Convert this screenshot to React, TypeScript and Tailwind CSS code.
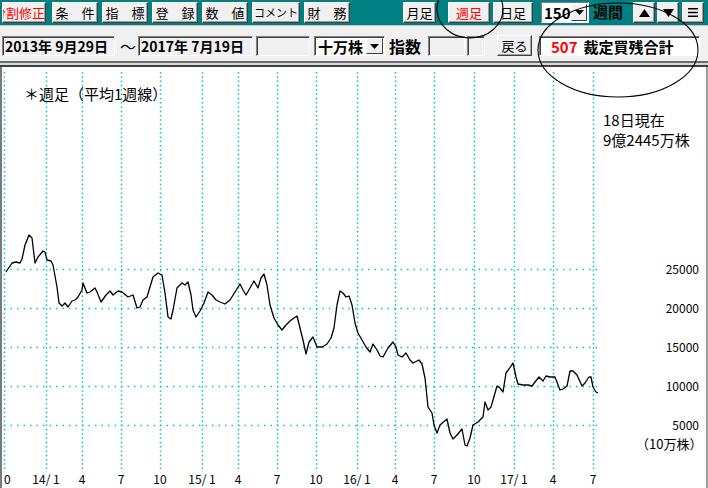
import React from "react";

// --- chart data (page coordinates) ---
const LINE: [number, number][] = [
  [6, 272], [12, 263], [16, 262], [20, 263], [22, 259], [25, 245], [29, 235], [32, 238], [35, 263], [38, 257],
  [43, 251], [45, 252], [47, 260], [51, 261], [53, 265], [57, 287], [59, 303], [62, 306], [65, 303], [68, 307],
  [72, 301], [75, 300], [78, 297], [82, 290], [83, 283], [87, 293], [90, 292], [95, 288], [97, 292], [101, 302],
  [106, 295], [108, 293], [110, 291], [113, 295], [118, 291], [122, 292], [128, 297], [133, 295], [137, 308],
  [140, 307], [143, 300], [147, 297], [150, 287], [153, 277], [158, 273], [162, 275], [165, 293], [168, 317],
  [171, 319], [173, 310], [177, 288], [182, 283], [185, 285], [188, 282], [191, 295], [193, 310], [196, 317],
  [200, 311], [204, 303], [208, 292], [212, 295], [216, 300], [220, 302], [225, 304], [230, 300], [235, 292],
  [240, 284], [243, 290], [246, 295], [250, 288], [254, 281], [258, 288], [261, 278], [264, 274], [267, 285],
  [270, 305], [274, 318], [278, 325], [282, 330], [286, 325], [290, 321], [294, 318], [297, 316], [300, 328],
  [303, 340], [306, 354], [309, 342], [313, 337], [317, 347], [322, 347], [327, 344], [331, 338], [334, 328],
  [337, 305], [340, 291], [343, 293], [346, 297], [349, 296], [352, 305], [355, 323], [358, 333], [362, 340],
  [366, 347], [370, 352], [373, 344], [377, 350], [380, 356], [383, 357], [388, 348], [393, 342], [396, 347],
  [398, 355], [402, 357], [406, 353], [410, 360], [413, 363], [419, 360], [422, 364], [425, 378], [428, 407],
  [432, 413], [434, 425], [437, 433], [440, 425], [447, 419], [450, 433], [453, 439], [457, 435], [462, 429],
  [465, 445], [467, 446], [470, 438], [473, 425], [478, 422], [483, 417], [485, 402], [488, 410], [491, 407],
  [495, 393], [497, 386], [500, 388], [503, 392], [506, 373], [509, 369], [513, 363], [516, 377], [518, 384],
  [523, 385], [528, 385], [532, 386], [535, 382], [539, 377], [543, 381], [546, 376], [550, 377], [555, 377],
  [560, 390], [563, 389], [567, 386], [570, 371], [573, 371], [577, 375], [582, 386], [585, 383], [589, 377],
  [591, 377], [593, 387], [596, 392], [598, 393],
];

const V_LINES = [4, 46, 82, 121, 160, 202, 238, 277, 316, 357, 395, 434, 474, 514, 553, 593];
const X_LABELS = ["", "14/ 1", "4", "7", "10", "15/ 1", "4", "7", "10", "16/ 1", "4", "7", "10", "17/ 1", "4", "7"];
const H_LINES = [
  { y: 269, label: "25000" },
  { y: 308, label: "20000" },
  { y: 347, label: "15000" },
  { y: 386, label: "10000" },
  { y: 425, label: "5000" },
];

const JP = "'Noto Sans CJK JP', sans-serif";

// --- raised win-classic button ---
const Btn = ({
  children,
  className = "",
  red = false,
}: {
  children: React.ReactNode;
  className?: string;
  red?: boolean;
}) => (
  <div
    className={
      "h-[21px] flex items-center justify-center bg-[#f0f0f0] border border-t-white border-l-white border-r-[#404040] border-b-[#404040] shadow-[inset_-1px_-1px_0_#a0a0a0] text-[13px] leading-none whitespace-nowrap overflow-hidden " +
      (red ? "text-[#ff0000] " : "text-black ") +
      className
    }
  >
    {children}
  </div>
);

// --- sunken field ---
const Field = ({
  children,
  className = "",
}: {
  children?: React.ReactNode;
  className?: string;
}) => (
  <div
    className={
      "h-[20px] flex items-center leading-none border border-t-[#808080] border-l-[#808080] border-r-white border-b-white shadow-[inset_1px_1px_0_#404040] overflow-hidden whitespace-nowrap " +
      className
    }
  >
    {children}
  </div>
);

const DownTri = () => (
  <svg width="9" height="5" viewBox="0 0 9 5">
    <polygon points="0,0 9,0 4.5,5" fill="#000" />
  </svg>
);

export default function App() {
  return (
    <div
      className="relative w-[708px] h-[488px] overflow-hidden bg-[#f0f0f0] select-none"
      style={{ fontFamily: JP }}
    >
      {/* row 1: toolbar */}
      <div className="h-[25px] bg-[#008080] flex items-start pt-[2px]">
        <Btn red className="ml-[2px] w-[44px] !justify-end">
          分割修正
        </Btn>
        <Btn className="ml-[6px] w-[46px]">条　件</Btn>
        <Btn className="ml-[4px] w-[46px]">指　標</Btn>
        <Btn className="ml-[4px] w-[46px]">登　録</Btn>
        <Btn className="ml-[4px] w-[46px]">数　値</Btn>
        <Btn className="ml-[4px] w-[48px] !text-[11px]">コメント</Btn>
        <Btn className="ml-[4px] w-[46px]">財　務</Btn>
        <Btn className="ml-[53px] w-[33px]">月足</Btn>
        <Btn red className="ml-[12px] w-[42px]">週足</Btn>
        <Btn className="ml-[3px] w-[40px]">日足</Btn>
        <div className="ml-[8px] w-[48px] h-[21px] bg-white border border-t-[#808080] border-l-[#808080] border-r-white border-b-white flex items-center">
          <span className="pl-[2px] text-[15px] font-bold leading-none text-black">150</span>
          <div className="ml-auto mr-[1px] w-[16px] h-[17px] bg-[#f0f0f0] border border-t-white border-l-white border-r-[#404040] border-b-[#404040] flex items-center justify-center">
            <DownTri />
          </div>
        </div>
        <span className="ml-[4px] mt-[2px] text-[15px] font-bold leading-none text-black">週間</span>
        <Btn className="ml-[10px] w-[22px]">
          <svg width="11" height="8" viewBox="0 0 11 8">
            <polygon points="5.5,0 11,8 0,8" fill="#000" />
          </svg>
        </Btn>
        <Btn className="ml-[2px] w-[22px]">
          <svg width="11" height="8" viewBox="0 0 11 8">
            <polygon points="0,0 11,0 5.5,8" fill="#000" />
          </svg>
        </Btn>
        <Btn className="ml-[3px] w-[22px]">
          <svg width="10" height="9" viewBox="0 0 10 9">
            <rect x="0" y="0" width="10" height="1.5" fill="#000" />
            <rect x="0" y="3.75" width="10" height="1.5" fill="#000" />
            <rect x="0" y="7.5" width="10" height="1.5" fill="#000" />
          </svg>
        </Btn>
      </div>

      {/* row 2: period / series */}
      <div className="h-[35px] border-t border-[#c8c8c8] flex items-start pt-[10px] text-black">
        <Field className="ml-[2px] w-[113px] bg-[#f0f0f0] pl-[2px] text-[14px] font-bold">
          2013年&nbsp;9月29日
        </Field>
        <span className="ml-[5px] w-[17px] text-[16px] leading-[20px]">〜</span>
        <Field className="ml-[1px] w-[115px] bg-[#f0f0f0] pl-[2px] text-[14px] font-bold">
          2017年&nbsp;7月19日
        </Field>
        <Field className="ml-[3px] w-[54px] bg-[#f0f0f0]" />
        <Field className="ml-[4px] w-[71px] bg-white pl-[3px] text-[15px] font-bold">
          十万株
          <div className="ml-auto mr-[1px] w-[17px] h-[16px] bg-[#f0f0f0] border border-t-white border-l-white border-r-[#404040] border-b-[#404040] flex items-center justify-center">
            <DownTri />
          </div>
        </Field>
        <span className="ml-[4px] w-[35px] text-[16px] font-bold leading-[20px]">指数</span>
        <Field className="ml-[4px] w-[37px] bg-[#f0f0f0]" />
        <Field className="ml-[2px] w-[18px] bg-[#f0f0f0]" />
        <Btn className="ml-[12px] w-[35px] -mt-[1px] h-[21px]">戻る</Btn>
        <Field className="ml-[7px] w-[161px] bg-white text-[15px] font-bold">
          <span className="ml-[11px] text-[#ff0000] text-[15px]">507</span>
          <span className="ml-[6px]">裁定買残合計</span>
        </Field>
      </div>

      {/* separator */}
      <div className="h-[7px] pt-[1px]">
        <div className="h-[6px] border-y-2 border-t-[#6d6d6d] border-b-[#404040] bg-[#d8d8d8]" />
      </div>

      {/* chart */}
      <div className="h-[421px] bg-white border-l-2 border-l-[#7a7a7a] border-r-2 border-r-[#a0a0a0]">
        <svg width="704" height="421" viewBox="2 67 704 421" style={{ fontFamily: JP }}>
          {V_LINES.map((x) => (
            <line
              key={"v" + x}
              x1={x + 0.5}
              y1={72}
              x2={x + 0.5}
              y2={470}
              stroke="#00c8c8"
              strokeWidth={1.5}
              strokeDasharray="1.5 2.8"
            />
          ))}
          {H_LINES.map((h) => (
            <line
              key={"h" + h.y}
              x1={4}
              y1={h.y + 0.5}
              x2={601}
              y2={h.y + 0.5}
              stroke="#00c8c8"
              strokeWidth={1.5}
              strokeDasharray="1.5 5"
            />
          ))}
          <polyline
            points={LINE.map((p) => p.join(",")).join(" ")}
            fill="none"
            stroke="#000"
            strokeWidth={1.3}
            strokeLinejoin="round"
          />
          {H_LINES.map((h) => (
            <text key={"t" + h.y} x={699} y={h.y + 5} fontSize={12} textAnchor="end" fill="#000">
              {h.label}
            </text>
          ))}
          <text x={4} y={484} fontSize={12} fill="#000">
            0
          </text>
          {V_LINES.map((x, i) =>
            X_LABELS[i] ? (
              <text key={"x" + x} x={x} y={484} fontSize={12} textAnchor="middle" fill="#000" xmlSpace="preserve">
                {X_LABELS[i]}
              </text>
            ) : null,
          )}
          <text x={24} y={100} fontSize={15} fill="#000">
            ＊週足（平均1週線）
          </text>
          <text x={603} y={126} fontSize={15} fill="#000">
            18日現在
          </text>
          <text x={603} y={146} fontSize={15} fill="#000">
            9億2445万株
          </text>
          <text x={636} y={449} fontSize={13} fill="#000">
            （10万株）
          </text>
        </svg>
      </div>

      {/* hand-drawn annotation circles */}
      <svg className="absolute inset-0 pointer-events-none" width="708" height="488" viewBox="0 0 708 488">
        <ellipse cx={470} cy={9} rx={33} ry={29} fill="none" stroke="#000" strokeWidth={1.1} />
        <ellipse cx={618} cy={50} rx={80} ry={47} fill="none" stroke="#000" strokeWidth={1.1} />
      </svg>
    </div>
  );
}
